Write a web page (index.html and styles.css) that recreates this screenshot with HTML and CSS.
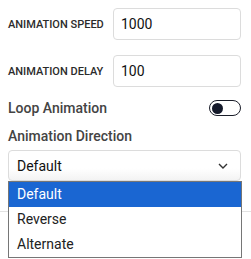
FILE: index.html
```html
<!DOCTYPE html>
<html lang="en">
<head>
    <meta charset="UTF-8">
    <meta name="viewport" content="width=device-width, initial-scale=1.0">
    <title>Animation Settings</title>
    <link rel="stylesheet" href="styles.css">
</head>
<body>
    <div class="page">
        <div class="panel">
            <div class="field-row">
                <label class="field-label" for="speed">Animation Speed</label>
                <input class="text-input" id="speed" type="text" value="1000">
            </div>
            <div class="field-row">
                <label class="field-label" for="delay">Animation Delay</label>
                <input class="text-input" id="delay" type="text" value="100">
            </div>

            <div class="toggle-row">
                <span class="option-label">Loop Animation</span>
                <span class="toggle"><span class="toggle-knob"></span></span>
            </div>

            <div class="option-label direction-label">Animation Direction</div>
            <div class="select-wrap">
                <div class="select-box">
                    <span>Default</span>
                    <svg class="chevron" width="10" height="6" viewBox="0 0 10 6">
                        <path d="M1 1 L5 5 L9 1" fill="none" stroke="#333" stroke-width="1.4"/>
                    </svg>
                </div>
                <ul class="select-menu">
                    <li class="active">Default</li>
                    <li>Reverse</li>
                    <li>Alternate</li>
                </ul>
            </div>
        </div>
        <div class="divider"></div>
    </div>
</body>
</html>
```

FILE: styles.css
```css
body {
    font-family: 'Roboto', 'Open Sans', sans-serif;
    background-color: #ffffff;
    margin: 0;
    padding: 0;
    color: #333;
}

.page {
    height: 259px;
    overflow: visible;
}

.panel {
    padding: 8px 10px 0 8px;
}

.field-row {
    display: flex;
    align-items: center;
    gap: 8px;
    margin-bottom: 15px;
}

.field-label {
    width: 97px;
    flex-shrink: 0;
    font-size: 11px;
    font-weight: 500;
    text-transform: uppercase;
    color: #2b2b2b;
    white-space: nowrap;
}

.text-input {
    flex: 1;
    min-width: 0;
    height: 32px;
    box-sizing: border-box;
    border: 1px solid #dcdcdc;
    border-radius: 4px;
    padding: 0 7px;
    font-family: inherit;
    font-size: 14px;
    color: #111;
    outline: none;
}

.toggle-row {
    display: flex;
    align-items: center;
    justify-content: space-between;
    margin-top: -4px;
    height: 20px;
}

.option-label {
    font-size: 14px;
    font-weight: 500;
    color: #444;
}

.toggle {
    width: 32px;
    height: 16px;
    box-sizing: border-box;
    border: 1.5px solid #1a1d29;
    border-radius: 8px;
    display: flex;
    align-items: center;
    padding-left: 1.5px;
}

.toggle-knob {
    width: 11px;
    height: 11px;
    border-radius: 50%;
    background-color: #151a2b;
}

.direction-label {
    margin-top: 7px;
    height: 22px;
    line-height: 22px;
}

.select-wrap {
    position: relative;
    margin-top: 3px;
}

.select-box {
    height: 31px;
    box-sizing: border-box;
    border: 1px solid #dcdcdc;
    border-radius: 4px;
    background: linear-gradient(#ffffff 60%, #f3f3f3);
    display: flex;
    align-items: center;
    justify-content: space-between;
    padding: 0 12px 0 8px;
    font-size: 14px;
    color: #111;
}

.chevron {
    display: block;
}

.select-menu {
    position: absolute;
    top: 31px;
    left: 0;
    right: -1px;
    margin: 0;
    padding: 0;
    list-style: none;
    background-color: #fff;
    border: 1px solid #767676;
    z-index: 2;
}

.select-menu li {
    height: 25px;
    line-height: 25px;
    padding-left: 8px;
    font-size: 14px;
    color: #222;
}

.select-menu li.active {
    background-color: #1a66d2;
    color: #fff;
}

.divider {
    margin-top: 30px;
    border-top: 1px solid #e2e2e2;
}
```
